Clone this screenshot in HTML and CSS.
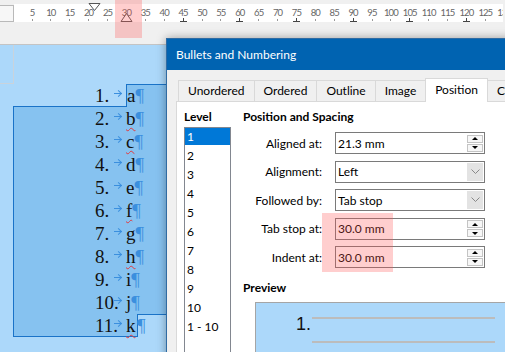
FILE: index.html
```html
<!DOCTYPE html>
<html lang="en">
<head>
  <meta charset="UTF-8" />
  <title>Bullets and Numbering</title>
  <link rel="stylesheet" href="styles.css">
</head>
<body>
  <div class="ruler-bar">
    <div class="tab-type"></div>
    <div class="ruler">
      <span>5</span><span>10</span><span>15</span><span>20</span><span>25</span><span>30</span>
      <span>35</span><span>40</span><span class="st">45</span><span>50</span><span>55</span><span class="st">60</span>
      <span>65</span><span>70</span><span class="st">75</span><span>80</span><span>85</span><span class="st">90</span>
      <span>95</span><span>100</span><span class="st">105</span><span>110</span><span>115</span><span class="st">120</span>
      <span>125</span><span>130</span><span>135</span>
    </div>
  </div>
  <svg class="marker first-indent" width="13" height="9" viewBox="0 0 13 9">
    <polygon points="1,0.5 12,0.5 6.5,7.5" fill="#fff" stroke="#555" />
  </svg>
  <svg class="marker left-indent" width="13" height="10" viewBox="0 0 13 10">
    <polygon points="6.5,0.5 12,8.5 1,8.5" fill="#fff" stroke="#555" />
  </svg>

  <div class="gutter"></div>

  <div class="page">
    <div class="corner"></div>
    <div class="list">
      <div class="line first">
        <div class="pre"><div class="lead"><span>1.</span><span class="tabmark"></span></div></div>
        <div class="head">a<span class="pil">¶</span></div>
      </div>
      <div class="block">
        <div class="line row"><div class="lead"><span>2.</span><span class="tabmark"></span></div><span class="typo">b</span><span class="pil">¶</span></div>
        <div class="line row"><div class="lead"><span>3.</span><span class="tabmark"></span></div><span class="typo">c</span><span class="pil">¶</span></div>
        <div class="line row"><div class="lead"><span>4.</span><span class="tabmark"></span></div>d<span class="pil">¶</span></div>
        <div class="line row"><div class="lead"><span>5.</span><span class="tabmark"></span></div>e<span class="pil">¶</span></div>
        <div class="line row"><div class="lead"><span>6.</span><span class="tabmark"></span></div><span class="typo">f</span><span class="pil">¶</span></div>
        <div class="line row"><div class="lead"><span>7.</span><span class="tabmark"></span></div>g<span class="pil">¶</span></div>
        <div class="line row"><div class="lead"><span>8.</span><span class="tabmark"></span></div><span class="typo">h</span><span class="pil">¶</span></div>
        <div class="line row"><div class="lead"><span>9.</span><span class="tabmark"></span></div>i<span class="pil">¶</span></div>
        <div class="line row"><div class="lead"><span>10.</span><span class="tabmark"></span></div>j<span class="pil">¶</span></div>
        <div class="line last">
          <div class="body"><div class="lead"><span>11.</span><span class="tabmark"></span></div><span class="typo">k</span></div>
          <div class="tail"><span class="pil">¶</span></div>
        </div>
      </div>
    </div>
  </div>

  <div class="dialog">
    <div class="titlebar">Bullets and Numbering</div>
    <div class="dialog-body">
      <div class="tabs">
        <div class="tab">Unordered</div>
        <div class="tab">Ordered</div>
        <div class="tab">Outline</div>
        <div class="tab">Image</div>
        <div class="tab on">Position</div>
        <div class="tab">Customize</div>
      </div>
      <div class="panel">
        <div class="levels">
          <h3>Level</h3>
          <ul>
            <li class="on">1</li>
            <li>2</li>
            <li>3</li>
            <li>4</li>
            <li>5</li>
            <li>6</li>
            <li>7</li>
            <li>8</li>
            <li>9</li>
            <li>10</li>
            <li>1 - 10</li>
          </ul>
        </div>
        <div class="pos">
          <h3>Position and Spacing</h3>
          <div class="fields">
            <label>Aligned at:</label>
            <div class="field"><span>21.3 mm</span><div class="spin"><i class="up"></i><i class="down"></i></div></div>
            <label>Alignment:</label>
            <div class="field"><span>Left</span><div class="drop"><svg width="9" height="6" viewBox="0 0 9 6"><polyline points="0.5,0.5 4.5,4.5 8.5,0.5" fill="none" stroke="#888" /></svg></div></div>
            <label>Followed by:</label>
            <div class="field"><span>Tab stop</span><div class="drop"><svg width="9" height="6" viewBox="0 0 9 6"><polyline points="0.5,0.5 4.5,4.5 8.5,0.5" fill="none" stroke="#888" /></svg></div></div>
            <label>Tab stop at:</label>
            <div class="field"><span>30.0 mm</span><div class="spin"><i class="up"></i><i class="down"></i></div></div>
            <label>Indent at:</label>
            <div class="field"><span>30.0 mm</span><div class="spin"><i class="up"></i><i class="down"></i></div></div>
          </div>
          <h3 class="preview-title">Preview</h3>
          <div class="preview">
            <div class="pnum">1.</div>
            <div class="plines"><i></i><i></i></div>
          </div>
        </div>
      </div>
    </div>
  </div>

  <div class="hl hl-ruler"></div>
  <div class="hl hl-fields"></div>
</body>
</html>
```

FILE: styles.css
```css
* {
  margin: 0;
  padding: 0;
  box-sizing: border-box;
}
html, body {
  width: 100%;
  height: 100%;
  overflow: hidden;
}
body {
  position: relative;
  background: #f0f0f0;
  font-family: Lato, "Noto Sans", sans-serif;
  font-size: 12px;
  color: #000;
}

/* ruler */
.ruler-bar {
  display: flex;
  height: 22px;
  padding-top: 4px;
}
.tab-type {
  width: 14px;
  height: 17px;
  margin-top: 1px;
  border: 1px solid #b9b9b9;
  border-left: none;
  background: #f7f7f7;
}
.ruler {
  flex: 1;
  display: flex;
  height: 18px;
  margin-right: 2px;
  padding-left: 8.5px;
  background: #fff;
  overflow: hidden;
}
.ruler span {
  flex: none;
  position: relative;
  width: 18.9px;
  text-align: center;
  font-size: 9.5px;
  letter-spacing: -0.9px;
  line-height: 18px;
  color: #666;
}
.ruler span::before {
  content: "";
  position: absolute;
  left: 9px;
  top: 15px;
  width: 1px;
  height: 2px;
  background: #999;
}
.ruler span.st::before {
  top: 14px;
  height: 3px;
  background: #444;
}
.ruler span.st::after {
  content: "";
  position: absolute;
  left: 6px;
  top: 17px;
  width: 7px;
  height: 1px;
  background: #444;
}
.marker {
  position: absolute;
}
.first-indent {
  left: 88px;
  top: 3px;
}
.left-indent {
  left: 120px;
  top: 13px;
}

.gutter {
  height: 23px;
  border-bottom: 1px solid #c4c4c4;
}

/* document */
.page {
  height: 307px;
  background: #acd8fa;
}
.corner {
  width: 14px;
  height: 39px;
  border-right: 1px solid #c9d3dc;
  border-bottom: 1px solid #c9d3dc;
}
.list {
  font-family: "Liberation Serif", serif;
  font-size: 19px;
  line-height: 23px;
  color: #111;
}
.line {
  display: flex;
  height: 23px;
  white-space: nowrap;
}
.lead {
  display: flex;
  flex: none;
  width: 31px;
}
.tabmark {
  flex: 1;
  position: relative;
  min-width: 0;
}
/* tab mark: small arrow */
.tabmark::before {
  content: "";
  position: absolute;
  right: 4px;
  top: 9px;
  width: 8px;
  height: 1px;
  background: #3b8fde;
}
.tabmark::after {
  content: "";
  position: absolute;
  right: 4px;
  top: 7px;
  width: 4px;
  height: 4px;
  border-top: 1px solid #3b8fde;
  border-right: 1px solid #3b8fde;
  transform: translateX(-1px) rotate(45deg);
}
.pil {
  color: #3b8fde;
}
.typo {
  text-decoration: underline wavy #e0393e;
  text-decoration-thickness: 1px;
  text-underline-offset: 2px;
}
.first .pre {
  display: flex;
  width: 113px;
  margin-left: 13px;
  padding-left: 82px;
  box-shadow: inset 0 -1px 0 #1a73c8;
}
.first .head {
  flex: 1;
  padding-left: 1px;
  background: #86c2f0;
  box-shadow: inset 1px 1px 0 #1a73c8;
}
.block {
  margin-left: 13px;
  background: #86c2f0;
  box-shadow: inset 1px 0 0 #1a73c8;
}
.row {
  padding-left: 82px;
}
.last .body {
  display: flex;
  width: 124px;
  padding-left: 82px;
  box-shadow: inset 0 -1px 0 #1a73c8;
}
.last .tail {
  flex: 1;
  background: #acd8fa;
  box-shadow: inset 1px 1px 0 #1a73c8;
}

/* dialog */
.dialog {
  position: absolute;
  left: 166px;
  top: 38px;
  width: 360px;
  height: 330px;
  border: 1px solid #2f6ba3;
  background: #f0f0f0;
  box-shadow: 0 0 9px rgba(0, 0, 0, 0.35);
}
.titlebar {
  display: flex;
  align-items: center;
  height: 31px;
  padding-left: 9px;
  background: #0063b1;
  color: #fff;
}
.dialog-body {
  padding: 10px 0 0 9px;
}
.tabs {
  display: flex;
  align-items: flex-end;
  height: 21px;
  padding-left: 2px;
}
.tab {
  flex: none;
  height: 21px;
  margin-right: -1px;
  padding: 0 9px;
  border: 1px solid #d9d9d9;
  border-bottom: none;
  line-height: 20px;
}
.tab.on {
  position: relative;
  z-index: 1;
  height: 24px;
  margin-bottom: -1px;
  background: #fff;
  line-height: 21px;
}
.panel {
  display: flex;
  height: 260px;
  padding: 7px 0 0 7px;
  border: 1px solid #d9d9d9;
  background: #fff;
}
h3 {
  font-size: 12px;
  font-weight: 700;
  line-height: 16px;
}
.levels {
  flex: none;
  width: 47px;
}
.levels ul {
  display: flex;
  flex-direction: column;
  gap: 2px;
  height: 240px;
  margin-top: 2px;
  border: 1px solid #828790;
  list-style: none;
}
.levels li {
  height: 17px;
  padding-left: 2px;
  line-height: 17px;
}
.levels li.on {
  background: #0078d7;
  color: #fff;
}
.pos {
  flex: 1;
  margin-left: 12px;
}
.fields {
  display: grid;
  grid-template-columns: 79px 150px;
  column-gap: 13px;
  row-gap: 6.5px;
  align-items: center;
  margin-top: 7px;
}
.fields label {
  text-align: right;
}
.field {
  display: flex;
  align-items: center;
  height: 22px;
  padding-left: 2px;
  border: 1px solid #7a7a7a;
  background: #fff;
}
.field span {
  flex: 1;
}
.spin {
  display: flex;
  flex-direction: column;
  gap: 1px;
  width: 16px;
  margin-right: 1px;
}
.spin i {
  display: flex;
  align-items: center;
  justify-content: center;
  height: 8px;
  border: 1px solid #c4c4c4;
  background: #f7f7f7;
}
.spin i::after {
  content: "";
  border-left: 3px solid transparent;
  border-right: 3px solid transparent;
}
.spin .up::after {
  border-bottom: 3px solid #000;
}
.spin .down::after {
  border-top: 3px solid #000;
}
.drop {
  display: flex;
  align-items: center;
  justify-content: center;
  align-self: stretch;
  width: 16px;
  margin: 1px 1px 1px 0;
  background: #e3e3e3;
}
.preview-title {
  margin-top: 12px;
}
.preview {
  display: flex;
  width: 260px;
  height: 60px;
  margin: 6px 0 0 12px;
  padding: 14px 0 0 40px;
  border: 1px solid #a5a5a5;
  background: #acd8fa;
}
.pnum {
  width: 16px;
  margin-top: -2px;
  font-family: "Liberation Sans", sans-serif;
  font-size: 18px;
  line-height: 18px;
  color: #111;
}
.plines {
  display: flex;
  flex-direction: column;
  gap: 22px;
  width: 183px;
}
.plines i {
  height: 2px;
  background: #bcbcbc;
}

/* highlight marks */
.hl {
  position: absolute;
  z-index: 5;
  background: rgba(255, 80, 80, 0.28);
}
.hl-ruler {
  left: 115px;
  top: 0;
  width: 27px;
  height: 38px;
}
.hl-fields {
  left: 322px;
  top: 213px;
  width: 71px;
  height: 59px;
}
```
